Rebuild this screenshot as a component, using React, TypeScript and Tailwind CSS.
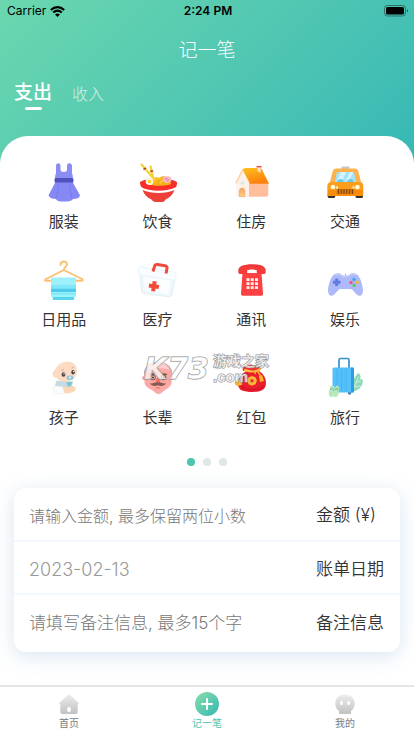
import { useState } from "react";
import type { ReactNode } from "react";
import { clsx } from "clsx";

const DressIcon = () => (
  <svg viewBox="0 0 48 48" className="size-12" aria-hidden="true">
    <path d="M16 7c0-2 .8-2.800 2.300-2.800S20.500 5 20.500 7v4c0 2.500 6.500 2.500 6.500 0V7c0-2 .8-2.800 2.300-2.800S32 5 32 7v6c0 2 1 3 1 7H15c0-4 1-5 1-7z" fill="#8b8df2" />
    <path d="M15.500 22h17c1.500 5 5 9 7.500 14.500-.5 2.500-3 3.500-7 3.500-1 2-4 2.500-9 2.500S17 42 16 40c-4 0-6.500-1-7.500-3.500C11 31 14 27 15.500 22z" fill="#8688f5" />
    <path d="M18 26c0 5-.5 9-2 13M30 26c0 5 .5 9 2 13" stroke="#7679ea" strokeWidth="1" fill="none" />
    <rect x="14.500" y="19" width="19" height="4.500" rx="1.500" fill="#5052bd" />
  </svg>
);

const NoodlesIcon = () => (
  <svg viewBox="0 0 48 48" className="size-12" aria-hidden="true">
    <ellipse cx="24.500" cy="24" rx="18.500" ry="4.500" fill="#f0322e" />
    <path d="M17 26c0-7 4-9 8-7 5-4 12-1 12 7-5 2.500-15 2.500-20 0z" fill="#f6b016" />
    <path d="M21 24c0-4 3-6 6-4M26 25c1-4 5-5 8-1" stroke="#fcc938" strokeWidth="1.300" fill="none" />
    <path d="M7.500 5.500L20 20M16.500 7.500l3 12.500" stroke="#f7d23c" strokeWidth="2.300" strokeLinecap="round" />
    <path d="M9.500 10.500l2.500-1.500M16.300 12.500l2.800-.7" stroke="#b0432b" strokeWidth="1.500" />
    <circle cx="15.500" cy="22.500" r="3.800" fill="#fff6d8" />
    <circle cx="15.500" cy="22.500" r="1.800" fill="#f9d02e" />
    <ellipse cx="33" cy="20.500" rx="4.500" ry="3.200" fill="#fbb9c8" />
    <path d="M30.500 20.500c1-2 4-1 4 .5s-3 1-2.500-.5" stroke="#ee6c8c" strokeWidth=".8" fill="none" />
    <path d="M6 23c8 5 29 5 37 0 0 4-1 6-3 7-8 4-23 4-31 0-2-2-3-4-3-7z" fill="#fb2e2a" />
    <path d="M7 28c9 5 26 5 35 0l-2 4.500c-8 5-23 5-31 0z" fill="#fff" />
    <path d="M8.500 31c9 4 23 4 32 0-2 5-5 8-9 9.500-1 2-2 2.500-4 2.500h-6c-2 0-3-1-4-2.500-4-1.500-7-4.500-9-9.500z" fill="#ee4038" />
  </svg>
);

const HouseIcon = () => (
  <svg viewBox="0 0 48 48" className="size-12" aria-hidden="true">
    <defs>
      <linearGradient id="roof" x1="0" y1="0" x2=".4" y2="1">
        <stop stopColor="#ffc01f" />
        <stop offset="1" stopColor="#fb820d" />
      </linearGradient>
      <linearGradient id="door" x1="0" y1="0" x2="0" y2="1">
        <stop stopColor="#f5a262" />
        <stop offset="1" stopColor="#fbd184" />
      </linearGradient>
    </defs>
    <path d="M20 23h21.300v13c0 1-1 1.700-2 1.700H20z" fill="#ffbf9d" />
    <path d="M9.500 23L15.500 11 22 23v14.700H11c-1 0-1.500-.7-1.500-1.700z" fill="#fff0e8" />
    <path d="M15.500 10.500c1-1 2-1.500 3-1.500h14c1 0 2 .5 2.500 1.500L42 24.700H23z" fill="url(#roof)" />
    <path d="M9 24l6.500-13" stroke="#ffcb9a" strokeWidth="1.300" strokeLinecap="round" />
    <path d="M30.500 8.500h3V14l-3-2z" fill="#ffe0d4" />
    <path d="M29.500 7h5v1.500h-5z" fill="#ef4e47" />
    <circle cx="15.500" cy="24" r="1.800" fill="#c6f0e9" />
    <path d="M12.300 37.700V32c0-4 5.500-4 5.500 0v5.700z" fill="url(#door)" stroke="#ea9160" strokeWidth=".5" />
  </svg>
);

const TaxiIcon = () => (
  <svg viewBox="0 0 48 48" className="size-12" aria-hidden="true">
    <rect x="6.700" y="34" width="7.500" height="5" rx="1.500" fill="#35312e" />
    <rect x="34.500" y="34" width="7.500" height="5" rx="1.500" fill="#35312e" />
    <rect x="20.500" y="7.500" width="8" height="4" rx="1" fill="#c4c6c9" />
    <path d="M11.500 13c.5-2.500 2-3.500 4-3.500h18c2 0 3.500 1 4 3.500l3 12H8.500z" fill="#fdb24d" />
    <path d="M15.500 15c.3-1.300 1-2 2-2h14c1 0 1.700.7 2 2l1.500 8H14z" fill="#a5e2fb" />
    <path d="M20 13h5l-4 9h-5zM29 13h3l-4 9h-3z" fill="#d7f5ff" />
    <path d="M16 23c1-4 6-4 7 0M26 23c1-4 6-4 7 0" fill="#65c8ed" />
    <path d="M10 23h29c2 0 3.300 2 3.300 4v8c0 1.500-.8 2-2 2H8.500c-1.500 0-2.200-.5-2.200-2v-8c0-2 1.500-4 3.700-4z" fill="#fa9f1c" />
    <path d="M7 31h35v4c0 1-1 2-2 2H9c-1 0-2-1-2-2z" fill="#fb8c0a" />
    <circle cx="12" cy="28" r="2.300" fill="#fff8db" />
    <circle cx="36.500" cy="28" r="2.300" fill="#fff8db" />
    <circle cx="16" cy="28.500" r="1.300" fill="#ffe7b3" />
    <circle cx="32.500" cy="28.500" r="1.300" fill="#ffe7b3" />
    <rect x="15.500" y="30" width="18" height="5" rx="1" fill="#d9780f" />
    <path d="M17.500 30v5M20.200 30v5M23 30v5M25.800 30v5M28.600 30v5M31.400 30v5" stroke="#7b4310" strokeWidth="1" />
  </svg>
);

const TowelIcon = () => (
  <svg viewBox="0 0 48 48" className="size-12" aria-hidden="true">
    <path d="M20.500 8c0-4.500 6.500-4.500 6.500-.5 0 2.500-3.200 2.500-3.200 5.500L42 22c1.500 1 1 1.800-.5 1.800h-35C4.500 23.800 4.300 23 6 22l17.800-9" fill="none" stroke="#fbc071" strokeWidth="1.900" strokeLinecap="round" strokeLinejoin="round" />
    <path d="M12.700 38h21.500v4c0 .6-.4 1-1 1H13.700c-.6 0-1-.4-1-1z" fill="#58d5ee" />
    <rect x="11" y="20.500" width="25" height="19.500" rx="1" fill="#9ef1fc" />
    <path d="M11 28h25v3H11z" fill="#80e7f8" />
    <path d="M11 31.500h25v3.500H11z" fill="#4ecbea" />
    <path d="M11 36h25v1.500H11z" fill="#7ae6f8" />
  </svg>
);

const MedicalIcon = () => (
  <svg viewBox="0 0 48 48" className="size-12" aria-hidden="true">
    <path d="M6 16l35 5-3 16.500c-.4 1.700-1.500 2.400-3.500 2.200L10 36.500c-1.500-.3-2.200-1-2.400-2.500z" fill="#eef7fb" stroke="#dcebf2" strokeWidth=".8" />
    <path d="M9 19l28 4-2.500 14L11 34z" fill="#fbfdff" />
    <path d="M7 10l33 5c1.500.3 2.300 1.300 2 3l-1 3.500c-.4 1.300-1.300 1.800-3 1.500L6.500 18C4.500 17.500 4 17 4 15l.3-3c.2-1.500 1-2.200 2.700-2z" fill="#fafdff" stroke="#e4f0f6" strokeWidth=".8" />
    <path d="M19 14.500l1.500-5c.4-1.600 1.400-2.200 3-2l7.500 1.200c1.600.3 2.200 1.200 2 2.800l-1 5" fill="none" stroke="#f24a3b" strokeWidth="3" strokeLinejoin="round" />
    <path d="M18.700 24l4 .6-.5 3 3 .5-.6 4-3-.5-.5 3-4-.6.500-3-3-.5.600-4 3 .5z" fill="#f54a3a" />
  </svg>
);

const PhoneIcon = () => (
  <svg viewBox="0 0 48 48" className="size-12" aria-hidden="true">
    <path d="M15.500 16h19l1.500 21c0 1.200-.6 1.700-1.800 1.700H15.800c-1.200 0-1.800-.5-1.800-1.700z" fill="#fb4141" />
    <path d="M11.300 13.500c0-4 5-6.200 13.700-6.200s13.700 2.200 13.700 6.200V15c0 1.400-.8 2-2 2h-5c-1.300 0-2-.7-2-2v-2h-9.400v2c0 1.300-.7 2-2 2h-5c-1.200 0-2-.6-2-2z" fill="#f73b3b" />
    <path d="M12 12c2-2.500 6-3.500 13-3.500s11 1 13 3.500" stroke="#de3337" fill="none" strokeWidth=".8" />
    <path d="M22.500 12.500h5l1 3h-7z" fill="#fff" />
    <path d="M19.500 21.200h3v2.800h-3zM23.700 21.200h3v2.800h-3zM28 21.200h3v2.800h-3zM19.500 25.200h3V28h-3zM23.700 25.200h3V28h-3zM28 25.200h3V28h-3zM19.500 29.200h3V32h-3zM23.700 29.200h3V32h-3zM28 29.200h3V32h-3z" fill="#fff1ee" />
  </svg>
);

const GamepadIcon = () => (
  <svg viewBox="0 0 48 48" className="size-12" aria-hidden="true">
    <path d="M24.500 19v-2.500" stroke="#d28a9c" strokeWidth=".8" />
    <path d="M13 17.500c3-2 6-1.500 8 .5 1 1 6 1 7 0 2-2 5-2.500 8-.5 3 2 6 11 6 16 0 5-3 6.500-5.500 4.500-3-2-4.500-5.500-7-6h-10c-2.500.5-4 4-7 6-2.500 2-5.500.5-5.500-4.500 0-5 3-14 6-16z" fill="#adb9f8" />
    <path d="M14 18c3-1.500 5-1 7 1 1.500 1 5.500 1 7 0 2-2 4-2.500 7-1" stroke="#c3cbfc" strokeWidth="1.200" fill="none" />
    <path d="M14.200 21.500h3v2.300h2.300v3h-2.300V29h-3v-2.200h-2.300v-3h2.300z" fill="#617be3" />
    <circle cx="33" cy="22.500" r="1.700" fill="#3aa8f0" />
    <circle cx="30" cy="25.500" r="1.700" fill="#f05480" />
    <circle cx="36" cy="25.300" r="1.700" fill="#f9b52b" />
    <circle cx="33" cy="28.200" r="1.700" fill="#58c878" />
  </svg>
);

const BabyIcon = () => (
  <svg viewBox="0 0 48 48" className="size-12" aria-hidden="true">
    <path d="M22 30l11 1c3 1 3.500 3 1.500 5-2 2-8 3-12.500 2z" fill="#fcd6b8" />
    <path d="M14.500 31c4-3 9 0 9.500 7-3 1.500-8 1.500-10-1-1-2-1-4 .5-6z" fill="#fafbfd" stroke="#eaf0f3" strokeWidth=".6" />
    <path d="M16 26c4-1 13 1 17 0 0 4-1 6-5 6-5 0-9-1-13-1z" fill="#c4dde2" />
    <path d="M12.500 19c0-2 1-3 2.500-4 2-5 7-8.500 12.500-8.500 6 0 9.500 4 9.500 9 0 7-5 11-12 11-4.500 0-6.500-1.500-8-3.500-2.500 0-4.500-1.500-4.500-4z" fill="#fcdbc2" />
    <ellipse cx="23.500" cy="19.500" rx="1.900" ry="2.300" fill="#4b434a" />
    <ellipse cx="33" cy="17.300" rx="1.700" ry="2.200" fill="#4b434a" />
    <circle cx="24" cy="18.800" r=".7" fill="#fff" />
    <circle cx="33.500" cy="16.600" r=".7" fill="#fff" />
    <path d="M21 15.500l3-1M31.500 13l2.500-.5" stroke="#d3a68b" strokeWidth=".8" fill="none" />
    <ellipse cx="30" cy="22.800" rx="3.500" ry="2.200" fill="#8ec5d6" />
    <circle cx="30" cy="22.500" r="1.200" fill="#d6edf3" />
    <path d="M26.500 27h5.500c0 2.500-1 4-3 5-1.500-1-2.500-3-2.500-5z" fill="#86c2cd" />
  </svg>
);

const ElderIcon = () => (
  <svg viewBox="0 0 48 48" className="size-12" aria-hidden="true">
    <path d="M10 17c1-6 6-10 14-10s13 4 14 10l-1 8H11z" fill="#aaa19e" />
    <circle cx="10.500" cy="23" r="2.300" fill="#f4a19b" />
    <circle cx="37" cy="23" r="2.300" fill="#f4a19b" />
    <path d="M10.500 20c0-8 6-13 13.500-13s13.500 5 13.500 13v8c-1 5-6 6-9 9-2 2.500-6 2.500-8 0-3-3-9-4-10-9z" fill="#faa9a4" />
    <path d="M12.500 15c2-5 6-8 11.500-8s9.500 3 11.500 8c-5-2.500-18-2.500-23 0z" fill="#fbcdcc" />
    <path d="M15.500 19.500l5-.5M28 19l5 .5" stroke="#77504c" strokeWidth="1.300" />
    <circle cx="19" cy="22.500" r="2.400" fill="#f8ccc3" stroke="#5d4a4d" strokeWidth=".9" />
    <circle cx="29.500" cy="22.500" r="2.400" fill="#f8ccc3" stroke="#5d4a4d" strokeWidth=".9" />
    <circle cx="19" cy="22.500" r="1" fill="#322b30" />
    <circle cx="29.500" cy="22.500" r="1" fill="#322b30" />
    <ellipse cx="24" cy="25.500" rx="2.200" ry="2.500" fill="#f16f5e" />
    <path d="M24 27.500c-3-1-4 1.500-8 .8 1.500 3 5.500 3 8 2 2.500 1 6.500 1 8-2-4 .7-5-1.800-8-.8z" fill="#875953" />
    <path d="M22 33.500c1-.8 3-.8 4 0" stroke="#e8766d" strokeWidth="1.200" fill="none" />
  </svg>
);

const LuckyBagIcon = () => (
  <svg viewBox="0 0 48 48" className="size-12" aria-hidden="true">
    <path d="M16 16c-1-3 1-6 4-5 2-2 5-2 7 0 3-1 6 0 7 3l-3 3z" fill="#ef3435" />
    <path d="M20 16c-6 2-9 8-9 13 0 6 5 8 15 8 9 0 13-3 13-9 0-6-4-11-9-13z" fill="#ea1e2c" />
    <path d="M14 30c2 5 17 7 23 1" stroke="#d01529" strokeWidth="1.500" fill="none" />
    <path d="M18 15c5 2 11 2 15-1" stroke="#fac33e" strokeWidth="2" strokeLinecap="round" fill="none" />
    <path d="M30 15l3 5 2 6M29 15l-1 4" stroke="#f4b42e" strokeWidth="1.500" fill="none" />
    <path d="M32 21l3-1 2 6-4 1z" fill="#f9b62d" />
    <path d="M25 21l3.500 1.300L30 25.800l-1.500 3.500-3.500 1.500-3.500-1.500-1.500-3.500 1.500-3.500z" fill="#f8b63c" />
    <rect x="23.600" y="24.400" width="2.800" height="2.800" fill="#e3272b" />
    <path d="M8 26l4-2 3 3v3l-5 1c-2-1-3-3-2-5z" fill="#fbb536" />
  </svg>
);

const LuggageIcon = () => (
  <svg viewBox="0 0 48 48" className="size-12" aria-hidden="true">
    <path d="M30 37c0-9 3-15 7.500-19 2.500 2 2.500 4 1.500 6 3-.5 3.500 2 2.500 4 0 4-5 8-11.500 9z" fill="#8fd9b8" />
    <path d="M31 37l6.500-15M33 31l-1-4M35 27l5-1M33 32l7-1" stroke="#d5f5e6" strokeWidth=".8" />
    <path d="M18 13V5c0-1 .5-1.500 1.500-1.500h7c1 0 1.500.5 1.500 1.500v8" fill="none" stroke="#3691cc" strokeWidth="1.700" />
    <circle cx="15" cy="38" r="1.500" fill="#487da7" />
    <circle cx="28.500" cy="38" r="1.700" fill="#487da7" />
    <rect x="11.500" y="12.500" width="21.500" height="25" rx="1.500" fill="#54c0fb" />
    <path d="M30 12.500h1.500c1 0 1.500.5 1.500 1.500v22c0 1-.5 1.500-1.500 1.500H30z" fill="#2a9de4" />
    <path d="M16 14v22M20.500 14v22M25 14v22" stroke="#47b4f1" strokeWidth="1" />
    <path d="M9.500 31c3-2 5 1 4 5 0 3-1 6-3 6s-3-2-2.500-5zM15 31c3-1 4 2 3 5-.5 3-1 6-3.500 6-2 0-2-2-1.500-5z" fill="#b8e8b9" />
    <path d="M9 35l2-2 2 3M14 35l2-2 1 3" stroke="#5dbfa0" strokeWidth="1" fill="none" />
  </svg>
);

const categories: { name: string; icon: ReactNode }[] = [
  { name: "服装", icon: <DressIcon /> },
  { name: "饮食", icon: <NoodlesIcon /> },
  { name: "住房", icon: <HouseIcon /> },
  { name: "交通", icon: <TaxiIcon /> },
  { name: "日用品", icon: <TowelIcon /> },
  { name: "医疗", icon: <MedicalIcon /> },
  { name: "通讯", icon: <PhoneIcon /> },
  { name: "娱乐", icon: <GamepadIcon /> },
  { name: "孩子", icon: <BabyIcon /> },
  { name: "长辈", icon: <ElderIcon /> },
  { name: "红包", icon: <LuckyBagIcon /> },
  { name: "旅行", icon: <LuggageIcon /> },
];

function StatusBar() {
  return (
    <div className="grid h-[22px] grid-cols-3 items-center pl-[7px] pr-[5px] font-['Inter',sans-serif] text-xs text-black">
      <div className="flex items-center gap-1">
        <span>Carrier</span>
        <svg viewBox="0 0 15 11" className="h-[11px] w-[15px]" aria-hidden="true">
          <path d="M.8 4c4-3.900 9.400-3.900 13.400 0M3.200 6.600c2.600-2.400 6-2.400 8.600 0" fill="none" stroke="#000" strokeWidth="2.100" />
          <path d="M5 8.400c1.500-1.300 3.500-1.300 5 0L7.500 11z" fill="#000" />
        </svg>
      </div>
      <span className="text-center font-semibold">2:24 PM</span>
      <svg viewBox="0 0 25 12" className="h-3 w-[25px] justify-self-end" aria-hidden="true">
        <rect x=".5" y=".5" width="21" height="10.500" rx="3" fill="none" stroke="#000" strokeOpacity=".4" />
        <rect x="2" y="2" width="18" height="7.500" rx="1.600" fill="#000" />
        <path d="M23 4v3.500c1.500-.5 1.500-3 0-3.500z" fill="#000" fillOpacity=".45" />
      </svg>
    </div>
  );
}

function Watermark() {
  return (
    <div className="pointer-events-none absolute left-36 top-[217px] flex items-center gap-1 font-bold text-white/70 [-webkit-text-stroke:1px_#8d8d8d] [paint-order:stroke_fill]">
      <span className="font-['DejaVu_Sans',sans-serif] text-[30px] italic leading-8">K73</span>
      <span className="flex flex-col leading-4">
        <span className="text-sm leading-4">游戏之家</span>
        <span className="font-['Liberation_Sans',sans-serif] text-[15px] leading-4">.com</span>
      </span>
    </div>
  );
}

export default function App() {
  const [tab, setTab] = useState("支出");
  const [page, setPage] = useState(0);

  return (
    <div className="flex min-h-screen flex-col bg-white font-['Liberation_Sans','Noto_Sans_CJK_SC',sans-serif] text-[#333]">
      <header className="bg-linear-135 from-[#6ad7ae] to-[#36b8b5] pb-7">
        <StatusBar />
        <h1 className="pt-[13px] text-center text-[19px] font-light leading-8 text-white">记一笔</h1>
        <nav className="mt-3 flex h-[57px] items-start gap-5 pl-3.5">
          {["支出", "收入"].map((name) => (
            <button
              key={name}
              onClick={() => setTab(name)}
              className={clsx(
                "flex flex-col items-center leading-7 text-white",
                tab === name ? "text-[19px] font-medium" : "pt-0.5 text-base font-light opacity-70",
              )}
            >
              {name}
              {tab === name && <span className="h-[3px] w-[17px] rounded-full bg-white" />}
            </button>
          ))}
        </nav>
      </header>

      <main className="relative -mt-7 flex-1 rounded-t-[28px] bg-white pt-[23px]">
        <section className="grid grid-cols-4 gap-y-3 pl-[17px] pr-[22px]">
          {categories.map((item) => (
            <button key={item.name} className="flex flex-col items-center">
              {item.icon}
              <span className="mt-[3px] h-[35px] text-[15px] leading-6">{item.name}</span>
            </button>
          ))}
        </section>
        <Watermark />

        <div className="mt-[17px] flex justify-center gap-2">
          {[0, 1, 2].map((i) => (
            <button
              key={i}
              aria-label={`${i + 1}`}
              onClick={() => setPage(i)}
              className={clsx("size-2 rounded-full", page === i ? "bg-[#4bc4b0]" : "bg-[#e0e8e6]")}
            />
          ))}
        </div>

        <form className="mx-3.5 mb-8 mt-[22px] rounded-xl bg-white font-['Inter','Noto_Sans_CJK_SC',sans-serif] shadow-[0_4px_20px_rgba(120,165,205,0.28)]">
          <div className="flex h-[54px] items-center border-b-2 border-[#f2f8fd] pl-[15px] pt-1">
            <input
              id="amount"
              placeholder="请输入金额, 最多保留两位小数"
              className="min-w-0 flex-1 text-base font-light outline-none placeholder:text-[#777]"
            />
            <label htmlFor="amount" className="w-[84px] text-[17px] font-[350]">
              金额 (¥)
            </label>
          </div>
          <div className="flex h-[53px] items-center border-b-2 border-[#f2f8fd] pl-[15px] pt-1">
            <input
              id="date"
              defaultValue="2023-02-13"
              className="min-w-0 flex-1 text-lg font-light text-[#999] outline-none"
            />
            <label htmlFor="date" className="w-[84px] text-[17px] font-[350]">
              账单日期
            </label>
          </div>
          <div className="flex h-[57px] items-center pl-[15px]">
            <input
              id="note"
              placeholder="请填写备注信息, 最多15个字"
              className="min-w-0 flex-1 text-[17px] font-light outline-none placeholder:text-[#777]"
            />
            <label htmlFor="note" className="w-[84px] text-[17px] font-[350]">
              备注信息
            </label>
          </div>
        </form>
      </main>

      <footer className="grid grid-cols-3 border-t-2 border-[#e5e5e5] bg-white pb-1 pt-[5px] text-[10px] leading-4 text-[#777c82]">
        <a href="#home" className="flex flex-col items-center">
          <svg viewBox="0 0 24 24" className="size-6" aria-hidden="true">
            <defs>
              <linearGradient id="gray" x1="0" y1="0" x2="0" y2="1">
                <stop stopColor="#ededed" />
                <stop offset="1" stopColor="#c1c1c1" />
              </linearGradient>
            </defs>
            <path d="M10.500 3.200c1-.9 2-.9 3 0l7.800 7.300c.9.900.5 1.800-.6 1.800v7.200c0 1.700-.8 2.500-2.500 2.500H5.800c-1.700 0-2.500-.8-2.500-2.500v-7.200c-1.100 0-1.500-.9-.6-1.800z" fill="url(#gray)" />
            <rect x="10" y="15" width="4" height="5" rx="2" fill="#fff" />
          </svg>
          首页
        </a>
        <a href="#add" className="flex flex-col items-center text-[#4cc5b0]">
          <svg viewBox="0 0 24 24" className="size-6" aria-hidden="true">
            <defs>
              <linearGradient id="teal" x1="0" y1="0" x2="1" y2="1">
                <stop stopColor="#8adda9" />
                <stop offset="1" stopColor="#35b9b5" />
              </linearGradient>
            </defs>
            <circle cx="12" cy="12" r="12" fill="url(#teal)" />
            <path d="M12 7v10M7 12h10" stroke="#fff" strokeWidth="2" strokeLinecap="round" />
          </svg>
          记一笔
        </a>
        <a href="#me" className="flex flex-col items-center">
          <svg viewBox="0 0 24 24" className="size-6" aria-hidden="true">
            <path d="M12 2.500c6 0 9.700 4 9.700 9 0 3.500-1.500 6-3.700 7.500V21c0 .7-.3 1-1 1H7c-.7 0-1-.3-1-1v-2c-2.200-1.500-3.700-4-3.700-7.500 0-5 3.700-9 9.700-9z" fill="url(#gray)" />
            <ellipse cx="8.500" cy="11" rx="1.500" ry="2" fill="#fff" />
            <ellipse cx="15.700" cy="11" rx="1.500" ry="2" fill="#fff" />
          </svg>
          我的
        </a>
      </footer>
    </div>
  );
}
